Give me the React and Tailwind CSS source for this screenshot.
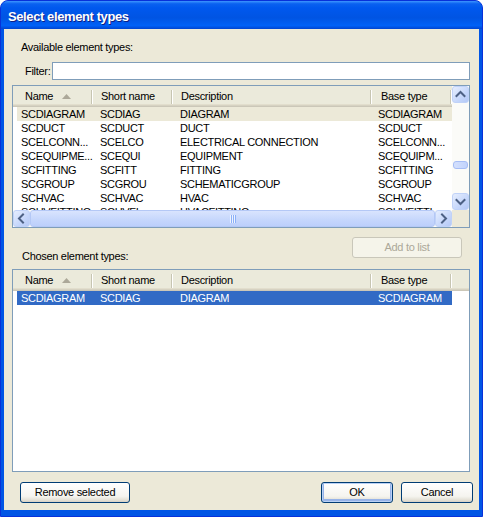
import React from "react";

const FONT = "font-['Liberation_Sans',Arial,sans-serif]";

const rows = [
  ["SCDIAGRAM", "SCDIAG", "DIAGRAM", "SCDIAGRAM"],
  ["SCDUCT", "SCDUCT", "DUCT", "SCDUCT"],
  ["SCELCONN...", "SCELCO", "ELECTRICAL CONNECTION", "SCELCONN..."],
  ["SCEQUIPME...", "SCEQUI", "EQUIPMENT", "SCEQUIPM..."],
  ["SCFITTING", "SCFITT", "FITTING", "SCFITTING"],
  ["SCGROUP", "SCGROU", "SCHEMATICGROUP", "SCGROUP"],
  ["SCHVAC", "SCHVAC", "HVAC", "SCHVAC"],
  ["SCHVFITTING", "SCHVFI", "HVACFITTING", "SCHVFITTI..."],
];

const ARROWS = {
  up: "M3.5 9 L7.5 5 L11.5 9",
  down: "M3.5 6 L7.5 10 L11.5 6",
  left: "M9 3.5 L5 7.5 L9 11.5",
  right: "M6 3.5 L10 7.5 L6 11.5",
};

function ArrowBtn({ dir }) {
  return (
    <div className="w-[17px] h-[17px] shrink-0 rounded-[3px] border border-[#c0d2f8] bg-[linear-gradient(135deg,#e6eefe_0%,#c6d7fb_60%,#b4c8f6_100%)] flex items-center justify-center">
      <svg width="15" height="15" viewBox="0 0 15 15">
        <path d={ARROWS[dir]} fill="none" stroke="#4d6185" strokeWidth="2" strokeLinecap="square" />
      </svg>
    </div>
  );
}

function Sep() {
  return <div className="w-[2px] h-[14px] self-center shrink-0 border-l border-[#c7c5b2] border-r border-r-white" />;
}

function Header({ filler }) {
  return (
    <div className="flex h-[21px] shrink-0 bg-[#ebeadb] shadow-[inset_0_-1px_#cbc7b8,inset_0_-2px_#d6d2c2,inset_0_-3px_#e2decd]">
      <div className="w-[78px] shrink-0 pl-[12px] flex items-center">
        <span>Name</span>
        <svg className="ml-[9px]" width="9" height="5" viewBox="0 0 9 5">
          <path d="M0 5 L4.5 0 L9 5 Z" fill="#aca899" />
        </svg>
      </div>
      <Sep />
      <div className="w-[78px] shrink-0 pl-[8px] flex items-center">Short name</div>
      <Sep />
      <div className="w-[197px] shrink-0 pl-[8px] flex items-center">Description</div>
      <Sep />
      <div className="w-[78px] shrink-0 pl-[9px] flex items-center">Base type</div>
      <Sep />
      {filler && <div className="flex-1" />}
    </div>
  );
}

function Row({ r, variant }) {
  const bg =
    variant === "grey" ? "bg-[#ece9d8]" : variant === "blue" ? "bg-[#316ac5] text-white" : "";
  return (
    <div className="h-[14px] shrink-0 flex">
      <div className={`ml-[4px] w-[435px] flex leading-[14px] whitespace-nowrap ${bg}`}>
        <div className="w-[76px] pl-[4px] overflow-hidden">{r[0]}</div>
        <div className="w-[80px] pl-[7px] overflow-hidden">{r[1]}</div>
        <div className="w-[199px] pl-[7px] overflow-hidden">{r[2]}</div>
        <div className="w-[80px] pl-[6px] overflow-hidden">{r[3]}</div>
      </div>
    </div>
  );
}

function XPButton({ children, className = "", primary }) {
  return (
    <button
      className={`h-[21px] rounded-[3px] border border-[#003c74] bg-[linear-gradient(to_bottom,#ffffff_0%,#f5f4ef_70%,#e3e0d5_90%,#d6d0c5_100%)] text-[11px] text-black ${
        primary ? "shadow-[inset_0_0_0_1px_#b9d1f5,inset_0_-1px_0_2px_#97b3e8]" : ""
      } ${className}`}
    >
      {children}
    </button>
  );
}

export default function App() {
  return (
    <div className={`w-[483px] h-[517px] ${FONT} text-[11px] tracking-[-0.3px] text-black`}>
      <div className="w-full h-full flex flex-col rounded-t-[8px] bg-[#0055e5] border border-[#0831d9] overflow-hidden">
        {/* title bar */}
        <div className="h-[28px] shrink-0 px-[7px] pt-[3px] flex items-center bg-[linear-gradient(to_bottom,#3d95ff_0%,#0a61f0_10%,#0058ee_25%,#0054e3_60%,#0061f7_88%,#0044d0_100%)]">
          <span className="text-white font-bold text-[13px] tracking-[-0.4px] [text-shadow:1px_1px_#0f1f84]">
            Select element types
          </span>
        </div>

        {/* client */}
        <div className="flex-1 mx-[3px] mb-[6px] bg-[#ece9d8] pl-[8px] pr-[9px] flex flex-col">
          <div className="mt-[12px] h-[13px] leading-[13px] pl-[9px]">Available element types:</div>

          <div className="mt-[8px] h-[18px] flex items-center">
            <span className="ml-[13px] w-[27px]">Filter:</span>
            <div className="flex-1 h-[18px] border border-[#7f9db9] bg-white" />
          </div>

          {/* list 1 */}
          <div className="mt-[5px] h-[143px] border border-[#7f9db9] bg-white flex flex-col">
            <div className="flex h-[124px]">
              <div className="flex-1 flex flex-col overflow-hidden">
                <Header />
                {rows.map((r, i) => (
                  <Row key={i} r={r} variant={i === 0 ? "grey" : ""} />
                ))}
              </div>
              <div className="w-[17px] shrink-0 flex flex-col bg-[#fbfbf8]">
                <ArrowBtn dir="up" />
                <div className="flex-1 flex flex-col">
                  <div className="h-[58px]" />
                  <div className="mx-[1px] h-[8px] rounded-[3px] border border-[#a6bdf5] bg-[linear-gradient(to_right,#d4e0fd,#c1d3fc)]" />
                </div>
                <ArrowBtn dir="down" />
              </div>
            </div>
            <div className="flex h-[17px]">
              <div className="flex-1 flex bg-[#fbfbf8]">
                <ArrowBtn dir="left" />
                <div className="flex-1 rounded-[3px] border border-[#b4c8f6] bg-[linear-gradient(to_bottom,#d9e4fe,#c5d6fc_60%,#bccffb)] flex items-center justify-center">
                  <svg width="8" height="8" viewBox="0 0 8 8">
                    <path d="M1.5 0 V8 M3.5 0 V8 M5.5 0 V8" stroke="#eef3fe" strokeWidth="1" />
                    <path d="M2.5 0 V8 M4.5 0 V8 M6.5 0 V8" stroke="#8cb0f8" strokeWidth="1" />
                  </svg>
                </div>
                <ArrowBtn dir="right" />
              </div>
              <div className="w-[17px] bg-[#ece9d8]" />
            </div>
          </div>

          {/* middle row */}
          <div className="mt-[9px] h-[26px] flex justify-between">
            <div className="self-end h-[13px] leading-[13px] pl-[10px]">Chosen element types:</div>
            <button className="mr-[8px] w-[110px] h-[21px] rounded-[3px] border border-[#c9c7ba] bg-[#f5f4ea] text-[11px] text-[#aca899]">
              Add to list
            </button>
          </div>

          {/* list 2 */}
          <div className="mt-[6px] h-[203px] border border-[#7f9db9] bg-white flex flex-col overflow-hidden">
            <Header filler />
            <Row r={rows[0]} variant="blue" />
          </div>

          {/* buttons */}
          <div className="mt-[10px] h-[21px] flex ml-[8px] -mr-[3px]">
            <XPButton className="w-[110px]">Remove selected</XPButton>
            <div className="flex-1" />
            <XPButton className="w-[72px]" primary>OK</XPButton>
            <XPButton className="w-[72px] ml-[8px]">Cancel</XPButton>
          </div>
        </div>
      </div>
    </div>
  );
}
